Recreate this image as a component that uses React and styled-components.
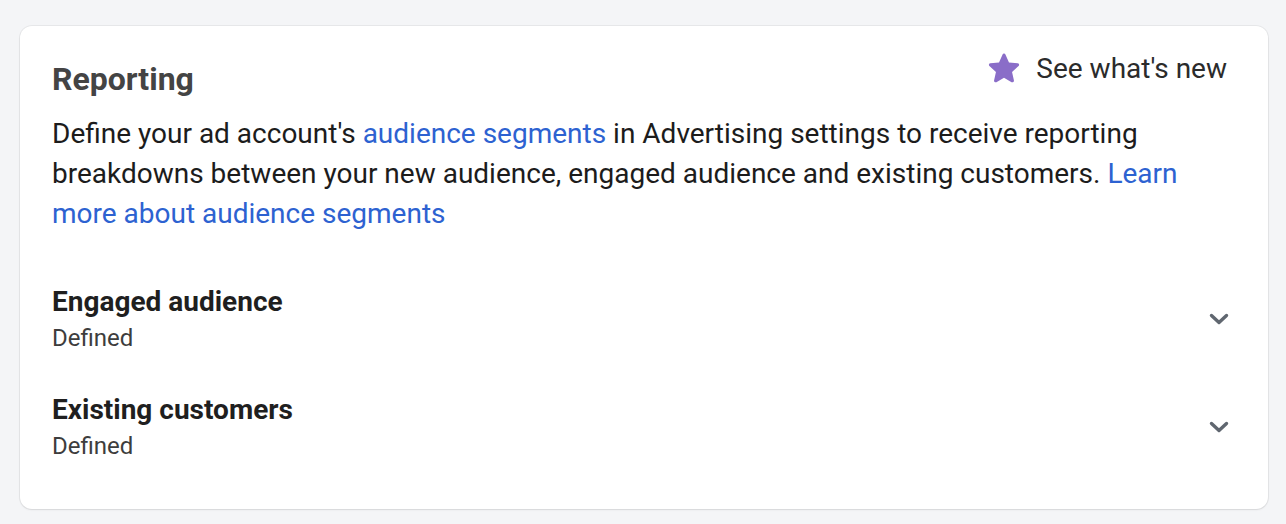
import React from "react";
import styled, { createGlobalStyle } from "styled-components";

const GlobalStyle = createGlobalStyle`
  html, body {
    margin: 0;
    padding: 0;
    background: #f4f5f7;
    font-family: Roboto, "Liberation Sans", Arial, sans-serif;
    -webkit-font-smoothing: antialiased;
  }
`;

const Page = styled.div`
  padding: 26px 18px 14px 20px;
`;

const Card = styled.section`
  background: #ffffff;
  border-radius: 12px;
  box-shadow: 0 0 0 1px rgba(0, 0, 0, 0.05), 0 1px 2px rgba(0, 0, 0, 0.08);
  padding: 30px 32px 30px 32px;
  box-sizing: border-box;
  height: 483px;
`;

const Header = styled.div`
  display: flex;
  justify-content: space-between;
  align-items: flex-start;
`;

const Title = styled.h2`
  margin: 0;
  margin-top: 3px;
  font-size: 32px;
  line-height: 40px;
  font-weight: 700;
  color: #444444;
`;

const WhatsNew = styled.a`
  display: flex;
  align-items: center;
  gap: 13px;
  font-size: 28px;
  line-height: 32px;
  color: #2b2b2b;
  text-decoration: none;
  cursor: pointer;
  margin-top: -6px;
  margin-right: 9px;
`;

const Description = styled.p`
  margin: 15px 0 0;
  font-size: 28px;
  line-height: 40px;
  color: #1c1c1c;
`;

const Link = styled.a`
  color: #2d62d1;
  text-decoration: none;
  cursor: pointer;
`;

const Segments = styled.div`
  margin-top: 51px;
  display: flex;
  flex-direction: column;
  gap: 36px;
`;

const SegmentRow = styled.div`
  display: flex;
  align-items: center;
  justify-content: space-between;
`;

const SegmentText = styled.div`
  display: flex;
  flex-direction: column;
`;

const SegmentName = styled.div`
  font-size: 28px;
  line-height: 34px;
  font-weight: 700;
  color: #1f1f1f;
`;

const SegmentStatus = styled.div`
  font-size: 24px;
  line-height: 38px;
  color: #3d3d3d;
`;

const ChevronButton = styled.button`
  border: 0;
  background: none;
  padding: 0;
  margin: 0 7px 4px 0;
  display: flex;
  cursor: pointer;
`;

const Star = () => (
  <svg width="38" height="38" viewBox="0 0 24 24" aria-hidden="true">
    <path
      d="M12 2.2c.4 0 .75.23.9.6l2.25 5.05 5.5.55c.4.04.74.31.86.69.12.38 0 .8-.3 1.06l-4.13 3.67 1.2 5.4c.08.39-.07.8-.4 1.03-.32.23-.75.25-1.1.05L12 17.47 7.22 20.3c-.35.2-.78.18-1.1-.05-.33-.23-.48-.64-.4-1.03l1.2-5.4-4.13-3.67c-.3-.26-.42-.68-.3-1.06.12-.38.46-.65.86-.69l5.5-.55L11.1 2.8c.15-.37.5-.6.9-.6z"
      fill="#8a6dc8"
    />
  </svg>
);

const Chevron = () => (
  <svg width="20" height="14" viewBox="0 0 20 14" aria-hidden="true">
    <path
      d="M2.5 3.5L10 10.5L17.5 3.5"
      fill="none"
      stroke="#606770"
      strokeWidth="3.4"
      strokeLinecap="round"
      strokeLinejoin="round"
    />
  </svg>
);

const segments = [
  { name: "Engaged audience", status: "Defined" },
  { name: "Existing customers", status: "Defined" },
];

export default function App() {
  return (
    <>
      <GlobalStyle />
      <Page>
        <Card>
          <Header>
            <Title>Reporting</Title>
            <WhatsNew>
              <Star />
              See what's new
            </WhatsNew>
          </Header>
          <Description>
            Define your ad account's <Link>audience segments</Link> in
            Advertising settings to receive reporting breakdowns between your
            new audience, engaged audience and existing customers.{" "}
            <Link>Learn more about audience segments</Link>
          </Description>
          <Segments>
            {segments.map((s) => (
              <SegmentRow key={s.name}>
                <SegmentText>
                  <SegmentName>{s.name}</SegmentName>
                  <SegmentStatus>{s.status}</SegmentStatus>
                </SegmentText>
                <ChevronButton aria-label={`Expand ${s.name}`}>
                  <Chevron />
                </ChevronButton>
              </SegmentRow>
            ))}
          </Segments>
        </Card>
      </Page>
    </>
  );
}
